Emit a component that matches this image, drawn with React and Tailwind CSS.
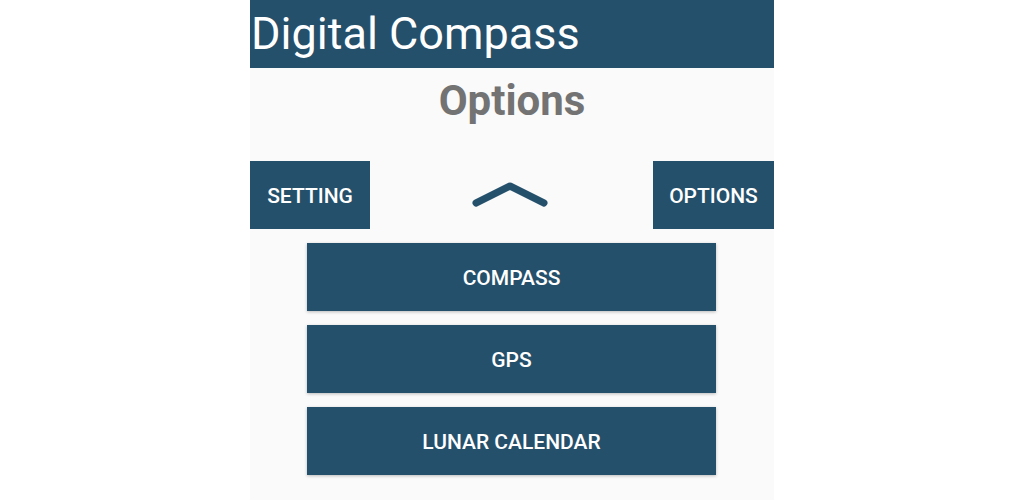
import React from "react";

const navy = "bg-[#25506b]";

function MenuButton({ label }) {
  return (
    <button className="h-[68px] w-full bg-[#25506b] text-white text-[21px] font-medium pt-[4px] shadow-[0_1px_3px_rgba(0,0,0,0.25)]">
      {label}
    </button>
  );
}

export default function App() {
  return (
    <div className="w-full h-[500px] bg-white flex justify-center font-['Roboto',sans-serif]">
      <div className="w-[524px] h-full bg-[#fafafa] flex flex-col">
        {/* header */}
        <div className={`${navy} h-[68px] flex items-center pl-[1px]`}>
          <h1 className="text-white text-[45px] leading-none pb-[2px]">Digital Compass</h1>
        </div>

        {/* title */}
        <h2 className="text-center text-[#737373] text-[42px] font-bold leading-none mt-[12px]">Options</h2>

        {/* top row */}
        <div className="flex items-center justify-between mt-[39px]">
          <button className={`${navy} w-[120px] h-[68px] text-white text-[21px] font-medium pt-[4px]`}>SETTING</button>
          <svg width="80" height="30" viewBox="0 0 80 30" className="mr-[2px]">
            <polyline
              points="5,23 39,6 73,23"
              fill="none"
              stroke="#25506b"
              strokeWidth="7"
              strokeLinecap="round"
              strokeLinejoin="round"
            />
          </svg>
          <button className={`${navy} w-[121px] h-[68px] text-white text-[21px] font-medium pt-[4px]`}>OPTIONS</button>
        </div>

        {/* menu */}
        <div className="flex flex-col gap-[14px] pl-[57px] pr-[58px] mt-[14px]">
          <MenuButton label="COMPASS" />
          <MenuButton label="GPS" />
          <MenuButton label="LUNAR CALENDAR" />
        </div>
      </div>
    </div>
  );
}
